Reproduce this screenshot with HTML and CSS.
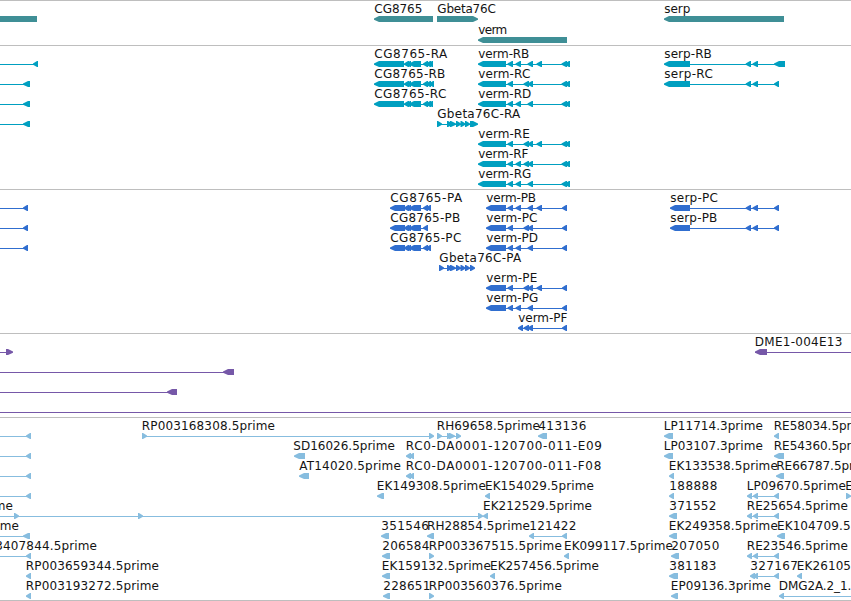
FILE: index.html
```html
<!DOCTYPE html>
<html lang="en">
<head>
<meta charset="utf-8">
<title>Genome tracks</title>
<link rel="stylesheet" href="styles.css">
</head>
<body>
<main class="browser">
  <section class="track genes"><svg class="lane" viewBox="0 1 851 44"></svg></section>
  <section class="track transcripts"><svg class="lane" viewBox="0 46 851 143"></svg></section>
  <section class="track proteins"><svg class="lane" viewBox="0 190 851 143"></svg></section>
  <section class="track clones"><svg class="lane" viewBox="0 334 851 83"></svg></section>
  <section class="track ests"><svg class="lane" viewBox="0 418 851 182"></svg></section>
</main>
<script src="tracks.js"></script>
</body>
</html>
```
FILE: styles.css
```css
body {
  margin: 0;
  background: #fff;
}

.browser {
  display: flex;
  flex-direction: column;
  height: 600px;
  width: 851px;
  overflow: hidden;
  border-bottom: 1px solid #bebebe;
}

.track {
  box-sizing: border-box;
  border-top: 1px solid #bebebe;
  flex: none;
}

.lane {
  display: block;
  width: 100%;
  height: 100%;
  fill: currentColor;
}

.lane text {
  fill: #141414;
  font: 12px "DejaVu Sans", sans-serif;
}

.genes { height: 45px; color: #3f8f96; }
.transcripts { height: 144px; color: #009fc0; }
.proteins { height: 144px; color: #306ecf; }
.clones { height: 84px; color: #7658a8; }
.ests { height: 183px; color: #87bddf; }
```
FILE: tracks.js
```js
// Feature: [axis y, direction, exons, label, label start, label end, line start, line end]
const tail = [[561.5, 567], [564.5, 570]];
const a = [507.5, 513], b = [515.5, 521], c = [523.5, 529], d = [527.5, 533], e = [536.5, 542];
const cgMid = [[404, 409], [406, 411], [409, 421]];
const re = [[747, 752], [753, 758], [774, 779]];
const sp = [[745.7, 751], [752.5, 758]];
const gb = [[447, 453], [450, 456], [456, 461], [460.5, 465.5], [465, 470]];

const tracks = {
  genes: [
    [19, 0, [[0, 37]]],
    [19, -1, [[374, 433]], "CG8765", 374, 422],
    [19, 1, [[437, 478]], "Gbeta76C", 437, 495.5],
    [40, -1, [[478, 567]], "verm", 478, 507],
    [19, -1, [[664, 784]], "serp", 664, 690]
  ],
  transcripts: [
    [64, -1, [[33, 38]], "", 0, 0, 0],
    [84, -1, [[23, 30]], "", 0, 0, 0],
    [104, -1, [[23, 30]], "", 0, 0, 0],
    [124, -1, [[23, 30]], "", 0, 0, 0],
    [64, -1, [[374, 404], ...cgMid, [423, 428], [426, 431], [428, 433]], "CG8765-RA", 374, 447],
    [84, -1, [[374, 404], ...cgMid, [423, 428], [426, 431], [429, 434]], "CG8765-RB", 374, 445],
    [104, -1, [[374, 404], ...cgMid, [423, 428], [426, 431], [428, 433]], "CG8765-RC", 374, 446],
    [124, 1, [[437, 442], ...gb, [470, 478]], "Gbeta76C-RA", 437, 520],
    [64, -1, [[478, 506], a, b, d, e, ...tail], "verm-RB", 478, 529],
    [84, -1, [[478, 506], a, c, d, ...tail], "verm-RC", 478, 530],
    [104, -1, [[478, 506], a, b, d, ...tail], "verm-RD", 478, 531],
    [144, -1, [[478, 506], a, c, d, e, ...tail], "verm-RE", 478, 529.5],
    [164, -1, [[478, 506], a, b, c, d, ...tail], "verm-RF", 478, 528],
    [184, -1, [[478, 506], a, b, d, ...tail], "verm-RG", 478, 531],
    [64, -1, [[664, 690], ...sp, [774, 785]], "serp-RB", 664, 711.5],
    [84, -1, [[664, 690], ...sp, [774, 779]], "serp-RC", 664, 712.5]
  ],
  proteins: [
    [208, -1, [[23, 28]], "", 0, 0, 0],
    [228, -1, [[23, 28]], "", 0, 0, 0],
    [248, -1, [[23, 28]], "", 0, 0, 0],
    [208, -1, [[390, 405], ...cgMid, [423, 428], [426, 431]], "CG8765-PA", 390, 462],
    [228, -1, [[390, 405], ...cgMid, [423, 428]], "CG8765-PB", 390, 460],
    [248, -1, [[390, 405], ...cgMid, [423, 428], [426, 431]], "CG8765-PC", 390, 461],
    [268, 1, [[439, 444], ...gb, [470, 475]], "Gbeta76C-PA", 439, 521],
    [208, -1, [[486, 506], a, b, d, e, [562, 567]], "verm-PB", 486, 535.7],
    [228, -1, [[486, 506], a, c, d, [562, 567]], "verm-PC", 486, 537],
    [248, -1, [[486, 506], a, b, d, [562, 567]], "verm-PD", 486, 537.7],
    [288, -1, [[486, 506], a, c, d, e, [562, 567]], "verm-PE", 486, 537],
    [308, -1, [[486, 506], a, b, d, [562, 567]], "verm-PG", 486, 538],
    [328, -1, [[518, 523], c, d, [562, 567]], "verm-PF", 518, 567],
    [208, -1, [[670, 690], ...sp, [774, 779]], "serp-PC", 670, 717.5],
    [228, -1, [[670, 690], ...sp, [774, 779]], "serp-PB", 670, 717]
  ],
  clones: [
    [352, 1, [[6, 13]], "", 0, 0, 0],
    [372, -1, [[223, 234]], "", 0, 0, 0],
    [392, -1, [[167, 177]], "", 0, 0, 0],
    [412, -1, [], "", 0, 0, 0, 851],
    [352, -1, [[755, 767]], "DME1-004E13", 754.5, 842, 755, 851]
  ],
  ests: [
    [436, -1, [[26, 31]], "", 0, 0, 0],
    [456, -1, [[26, 31]], "", 0, 0, 0],
    [476, -1, [[26, 31]], "", 0, 0, 0],
    [496, -1, [[26, 31]], "", 0, 0, 0],
    [436, 1, [[142, 147], [429, 434]], "RP003168308.5prime", 141.5, 274.7],
    [436, 1, [[437, 442], [447, 452], [449, 455], [456, 461]], "RH69658.5prime", 436.5, 539.5],
    [436, -1, [[538, 547]], "413136", 538, 586],
    [436, -1, [[664, 673]], "LP11714.3prime", 663.5, 762.5],
    [436, -1, [[774, 779]], "RE58034.5prime", 773.5, 873.5],
    [456, -1, [[294, 305]], "SD16026.5prime", 293, 394.5],
    [456, -1, [[406, 411], [409, 414]], "RC0-DA0001-120700-011-E09", 405.5, 601.7],
    [456, -1, [[664, 673]], "LP03107.3prime", 663.5, 762.5],
    [456, -1, [[774, 784]], "RE54360.5prime", 773.5, 873.5],
    [476, -1, [[299, 309]], "AT14020.5prime", 299, 400.5],
    [476, -1, [[406, 411], [409, 414]], "RC0-DA0001-120700-011-F08", 405.5, 601],
    [476, -1, [[669, 674]], "EK133538.5prime", 668.5, 777.5],
    [476, -1, [[776, 784]], "RE66787.5prime", 776, 876],
    [496, -1, [[377, 384]], "EK149308.5prime", 376.5, 485.5],
    [496, -1, [[485, 490]], "EK154029.5prime", 484.7, 593.5],
    [496, -1, [[669, 674]], "188888", 669, 717],
    [496, -1, re, "LP09670.5prime", 746.5, 845.5],
    [496, 1, [[846, 851]], "EK", 845, 860],
    [516, 1, [[14, 19], [138, 143], [478, 483]], "RP003168308.5prime", -120.5, 12.7, 0],
    [516, -1, [[483, 488]], "EK212529.5prime", 482.7, 591.5],
    [516, -1, [[669, 677]], "371552", 669, 716],
    [516, -1, re, "RE25654.5prime", 746.5, 847.5],
    [536, -1, [[23, 30]], "RE23546.5prime", -82, 18.5, 0],
    [536, -1, [[381, 389]], "351546", 381, 428.5],
    [536, -1, [[427, 434]], "RH28854.5prime", 426.7, 529.5],
    [536, -1, [[529, 534], [562, 567]], "121422", 529, 576],
    [536, -1, [[669, 677]], "EK249358.5prime", 668.5, 777.5],
    [536, -1, [[777, 785]], "EK104709.5prime", 776.7, 885.7],
    [556, -1, [[26, 31]], "RP003407844.5prime", -36.5, 96.7, 0],
    [556, -1, [[382, 390]], "206584", 382, 429],
    [556, 1, [[429, 434]], "RP003367515.5prime", 428.5, 561.5],
    [556, -1, [[564, 569]], "EK099117.5prime", 563.7, 672.5],
    [556, -1, [[671, 679]], "207050", 671, 719],
    [556, -1, re, "RE23546.5prime", 746.5, 847.5],
    [576, -1, [[26, 31]], "RP003659344.5prime", 25.5, 158.7],
    [576, -1, [[382, 390]], "EK159132.5prime", 381.5, 490.5],
    [576, -1, [[490, 495]], "EK257456.5prime", 489.7, 598.5],
    [576, -1, [[669, 678]], "381183", 669, 716],
    [576, -1, [[750, 755], [753, 758], [774, 779]], "327167", 750, 797.5],
    [576, -1, [[797, 802]], "EK261058.5prime", 796.5, 905.5],
    [596, -1, [[26, 31]], "RP003193272.5prime", 25.5, 158.7],
    [596, -1, [[383, 390]], "228651", 383, 430],
    [596, 1, [[429, 434]], "RP003560376.5prime", 428.5, 561.5],
    [596, -1, [[671, 678]], "EP09136.3prime", 670.5, 770.5],
    [596, -1, [[779, 784]], "DMG2A.2_1.", 778.5, 851, 779, 851]
  ]
};

// An exon is a 6px block whose leading end tapers to a point over 5px.
function exon([s, t], y, dir) {
  const top = y - 3, bot = y + 3;
  if (dir < 0) return `<path d="M${t} ${top}H${Math.min(s + 5, t - 1)}L${s} ${y - 0.5}V${y + 0.7}L${Math.min(s + 5, t - 1)} ${bot}H${t}Z"/>`;
  if (dir > 0) return `<path d="M${s} ${top}H${Math.max(t - 5, s + 1)}L${t} ${y - 0.5}V${y + 0.7}L${Math.max(t - 5, s + 1)} ${bot}H${s}Z"/>`;
  return `<path d="M${s} ${top}H${t}V${bot}H${s}Z"/>`;
}

for (const [name, features] of Object.entries(tracks)) {
  let shapes = "", labels = "";
  for (const [y, dir, exons, label, x, end, from, to] of features) {
    const l = from ?? exons[0][0] + 1;
    const r = to ?? exons[exons.length - 1][1] - 1;
    shapes += `<path d="M${l} ${y}H${r}V${y + 1}H${l}Z"/>`;
    for (const ex of exons) shapes += exon(ex, y, dir);
    if (label) labels += `<text x="${x + 0.3}" y="${y - 6}" textLength="${end - x}">${label}</text>`;
  }
  document.querySelector(`.${name} .lane`).innerHTML = shapes + labels;
}
```
